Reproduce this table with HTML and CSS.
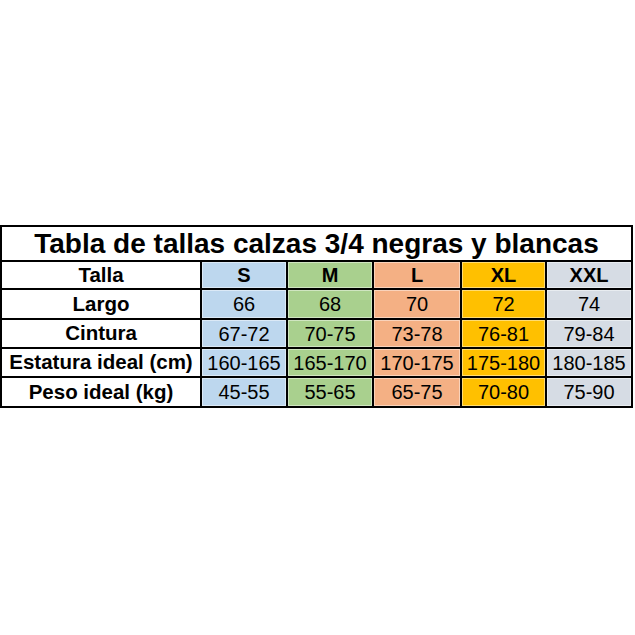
FILE: index.html
```html
<!DOCTYPE html>
<html lang="es">
<head>
<meta charset="utf-8">
<title>Tabla de tallas</title>
<link rel="stylesheet" href="styles.css">
</head>
<body>
<div class="page">
  <div class="chart">
    <div class="title">Tabla de tallas calzas 3/4 negras y blancas</div>

    <div class="label">Talla</div>
    <div class="cell s head">S</div>
    <div class="cell m head">M</div>
    <div class="cell l head">L</div>
    <div class="cell xl head">XL</div>
    <div class="cell xxl head">XXL</div>

    <div class="label">Largo</div>
    <div class="cell s">66</div>
    <div class="cell m">68</div>
    <div class="cell l">70</div>
    <div class="cell xl">72</div>
    <div class="cell xxl">74</div>

    <div class="label">Cintura</div>
    <div class="cell s">67-72</div>
    <div class="cell m">70-75</div>
    <div class="cell l">73-78</div>
    <div class="cell xl">76-81</div>
    <div class="cell xxl">79-84</div>

    <div class="label">Estatura ideal (cm)</div>
    <div class="cell s">160-165</div>
    <div class="cell m">165-170</div>
    <div class="cell l">170-175</div>
    <div class="cell xl">175-180</div>
    <div class="cell xxl">180-185</div>

    <div class="label">Peso ideal (kg)</div>
    <div class="cell s">45-55</div>
    <div class="cell m">55-65</div>
    <div class="cell l">65-75</div>
    <div class="cell xl">70-80</div>
    <div class="cell xxl">75-90</div>
  </div>
</div>
</body>
</html>
```
FILE: styles.css
```css
html, body {
  margin: 0;
  padding: 0;
  background: #ffffff;
}

.page {
  width: 635px;
  height: 635px;
  padding-top: 225px;
  box-sizing: border-box;
  font-family: "Liberation Sans", Arial, sans-serif;
  color: #000;
}

.chart {
  display: grid;
  width: 633px;
  box-sizing: border-box;
  grid-template-columns: 198px 84px 84px 86px 83px 84px;
  grid-template-rows: 33px 26px 28px 27px 27px 28px;
  gap: 2px;
  padding: 2px;
  background: #000;
}

.title {
  grid-column: 1 / -1;
  background: #fff;
  display: flex;
  align-items: center;
  justify-content: center;
  font-weight: bold;
  font-size: 28px;
  line-height: 1;
  padding-top: 1px;
}

.label {
  background: #fff;
  display: flex;
  align-items: center;
  justify-content: center;
  font-weight: bold;
  font-size: 20.5px;
  line-height: 1;
  white-space: nowrap;
}

.cell {
  display: flex;
  align-items: center;
  justify-content: center;
  font-size: 20px;
  line-height: 1;
  white-space: nowrap;
  box-shadow: inset 0 0 0 1px rgba(255, 255, 255, 0.45);
}

.cell.head {
  font-weight: bold;
}

.s { background: #bdd7ee; }
.m { background: #a9d08e; }
.l { background: #f4b084; }
.xl { background: #ffc000; }
.xxl { background: #d6dce4; }
```
